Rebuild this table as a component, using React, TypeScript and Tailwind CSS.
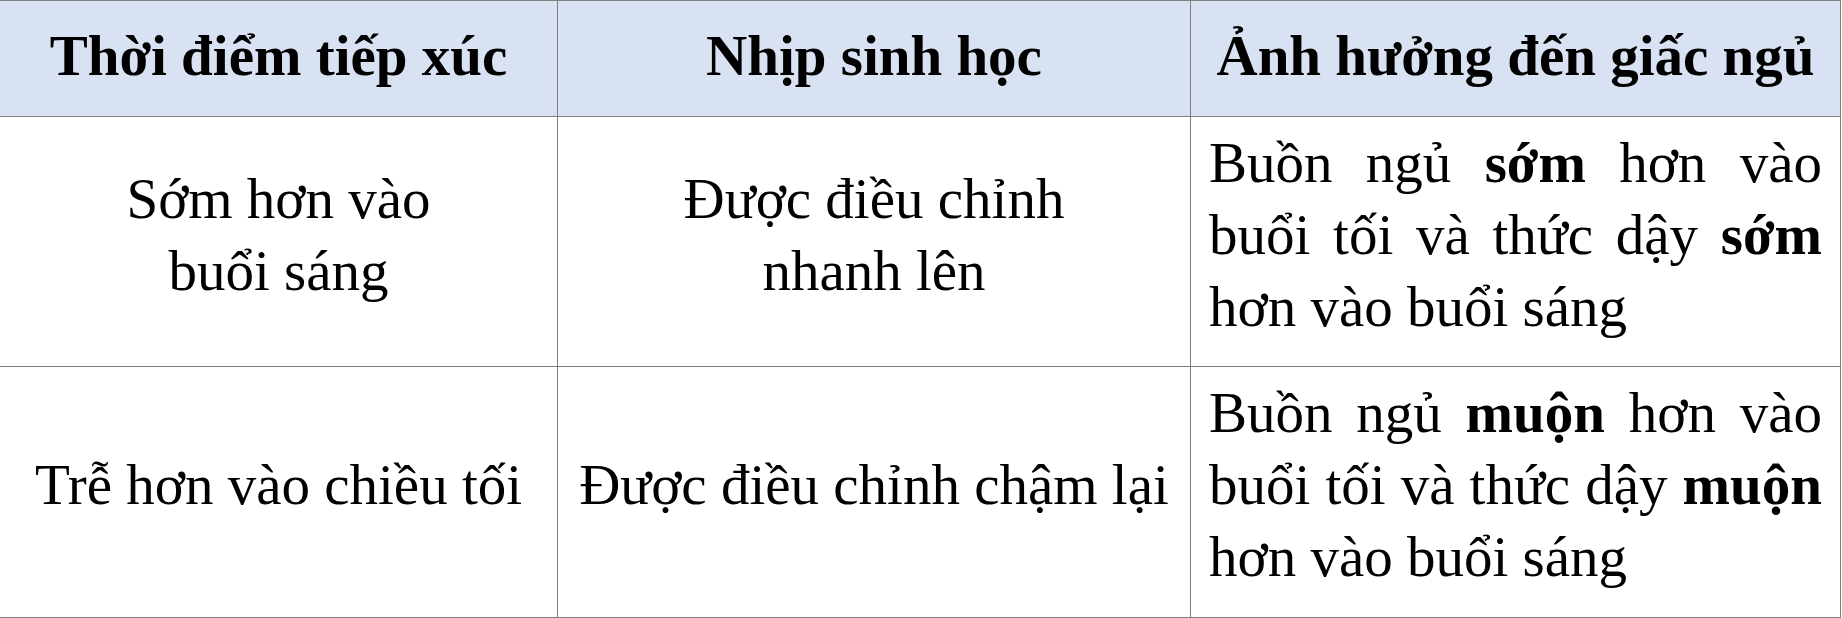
import React from "react";

const base = "border-r border-b border-[#7f7f7f] flex items-center px-[18px]";
const head = `${base} justify-center text-center bg-[#d9e2f3] font-bold pb-[6px]`;
const cell = `${base} justify-center text-center pb-[14px]`;
const just = `${base} pb-[14px]`;

export default function App() {
  return (
    <div className="w-[1842px] h-[618px] bg-white overflow-hidden">
      <div
        className="w-[1841px] grid grid-cols-[558px_633px_650px] grid-rows-[116px_250px_251px] border-t border-[#7f7f7f] text-black text-[57px] leading-[72px]"
        style={{ fontFamily: '"Liberation Serif", "DejaVu Serif", serif' }}
      >
        <div className={head}>Thời điểm tiếp xúc</div>
        <div className={head}>Nhịp sinh học</div>
        <div className={head}>Ảnh hưởng đến giấc ngủ</div>

        <div className={cell}>
          <span>
            Sớm hơn vào
            <br />
            buổi sáng
          </span>
        </div>
        <div className={cell}>
          <span>
            Được điều chỉnh
            <br />
            nhanh lên
          </span>
        </div>
        <div className={just}>
          <p className="text-justify w-full">
            Buồn ngủ <b>sớm</b> hơn vào buổi tối và thức dậy <b>sớm</b> hơn vào buổi sáng
          </p>
        </div>

        <div className={cell}>Trễ hơn vào chiều tối</div>
        <div className={cell}>Được điều chỉnh chậm lại</div>
        <div className={just}>
          <p className="text-justify w-full">
            Buồn ngủ <b>muộn</b> hơn vào buổi tối và thức dậy <b>muộn</b> hơn vào buổi sáng
          </p>
        </div>
      </div>
    </div>
  );
}
